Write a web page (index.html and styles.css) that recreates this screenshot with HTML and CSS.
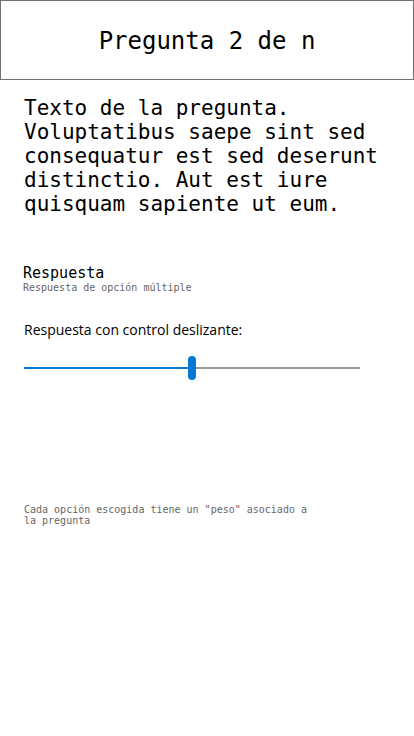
FILE: index.html
```html
<!DOCTYPE html>
<html lang="es">
<head>
<meta charset="utf-8">
<link rel="stylesheet" href="styles.css">
</head>
<body>
<header class="header"><h1 class="title">Pregunta 2 de n</h1></header>
<main class="content">
  <p class="question">Texto de la pregunta. Voluptatibus saepe sint sed consequatur est sed deserunt distinctio. Aut est iure quisquam sapiente ut eum.</p>
  <section class="answer">
    <div class="answer-title">Respuesta</div>
    <div class="answer-sub">Respuesta de opción múltiple</div>
  </section>
  <div class="slider-label">Respuesta con control deslizante:</div>
  <div class="slider">
    <div class="fill"></div>
    <div class="rest"></div>
    <div class="thumb"></div>
  </div>
  <p class="note">Cada opción escogida tiene un "peso" asociado a<br>la pregunta</p>
</main>
</body>
</html>
```
FILE: styles.css
```css
html, body { margin: 0; padding: 0; background: #fff; }
body { width: 414px; font-family: "DejaVu Sans Mono", monospace; color: #000; }
.header {
  box-sizing: border-box;
  height: 80px;
  border: 1px solid #707070;
  display: flex;
  align-items: center;
  justify-content: center;
}
.title { margin: 0; font-size: 24px; font-weight: normal; line-height: 28px; padding-top: 2px; }
.content { padding: 0 24px; }
.question { margin: 16px 0 0; font-size: 21px; line-height: 24px; }
.answer { margin-top: 49px; margin-left: -1px; }
.answer-title { font-size: 15px; line-height: 17px; }
.answer-sub { font-size: 10px; line-height: 12px; color: #666; }
.slider-label {
  margin-top: 26px;
  font-family: "Open Sans", "Noto Sans", sans-serif;
  font-size: 14px;
  line-height: 20px;
}
.slider {
  position: relative;
  margin-top: 27px;
  width: 336px;
  height: 2px;
  display: flex;
}
.fill { width: 167px; background: #0078d4; }
.rest { flex: 1; background: #999; }
.thumb {
  position: absolute;
  left: 164px;
  top: -11px;
  width: 8px;
  height: 24px;
  border-radius: 4px;
  background: #0078d4;
}
.note { margin: 135px 0 0; font-size: 10px; line-height: 11px; color: #666; }
```
